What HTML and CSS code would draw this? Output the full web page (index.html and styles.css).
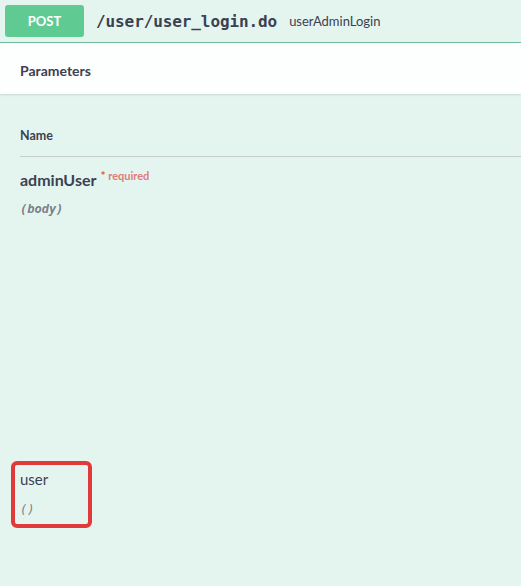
FILE: index.html
```html
<!DOCTYPE html>
<html>
<head>
<meta charset="utf-8">
<link rel="stylesheet" href="styles.css">
</head>
<body>
<div class="opblock">
  <div class="summary">
    <span class="method">POST</span>
    <span class="path">/user/user_login.do</span>
    <span class="desc">userAdminLogin</span>
  </div>
  <div class="section-header">
    <h4>Parameters</h4>
  </div>
  <div class="params">
    <div class="col-head">Name</div>
    <div class="param">
      <div class="pname">adminUser<span class="req"><span class="star">*</span> required</span></div>
      <div class="pin">(body)</div>
    </div>
    <div class="param highlight">
      <div class="pname plain">user</div>
      <div class="pin">()</div>
    </div>
  </div>
</div>
</body>
</html>
```
FILE: styles.css
```css
html, body {
  margin: 0;
  padding: 0;
  height: 100%;
  background: #e4f5ef;
}
body {
  font-family: Lato, "Open Sans", sans-serif;
  color: #3b4151;
}
.opblock {
  min-height: 586px;
  background: #e4f5ef;
}
.summary {
  display: flex;
  align-items: center;
  height: 42px;
  padding: 0 5px;
  border-bottom: 1px solid #6dbf9a;
  box-sizing: content-box;
}
.method {
  display: flex;
  align-items: center;
  justify-content: center;
  width: 79px;
  height: 32px;
  background: #5fcb92;
  color: #fff;
  font-weight: 700;
  font-size: 13px;
  border-radius: 3px;
}
.path {
  margin-left: 12px;
  font-family: "DejaVu Sans Mono", monospace;
  font-weight: 600;
  font-size: 16px;
  color: #3b4151;
  letter-spacing: -0.1px;
}
.desc {
  margin-left: 12px;
  font-size: 13px;
  color: #3b4151;
}
.section-header {
  background: #fdfefe;
  height: 51px;
  display: flex;
  align-items: center;
  padding: 0 20px;
  box-shadow: 0 1px 2px rgba(0,0,0,0.12);
}
.section-header h4 {
  margin: 0;
  padding-top: 3px;
  font-size: 14px;
  font-weight: 700;
}
.params {
  padding: 0 0 0 20px;
}
.col-head {
  margin-top: 32px;
  height: 30px;
  font-size: 12.5px;
  font-weight: 700;
  line-height: 19px;
  border-bottom: 1px solid #c6cfcd;
}
.param {
  padding-top: 12px;
}
.pname {
  font-size: 16px;
  font-weight: 700;
  line-height: 22px;
}
.pname.plain {
  font-weight: 400;
  font-size: 15px;
}
.req {
  position: relative;
  top: -6px;
  margin-left: 4px;
  font-size: 11px;
  font-weight: 700;
  color: #e17a7a;
}
.star {
  color: #e04f4f;
  font-size: 12px;
}
.pin {
  margin-top: 9px;
  font-family: "DejaVu Sans Mono", monospace;
  font-style: italic;
  font-size: 12px;
  font-weight: 600;
  color: #7a7f89;
}
.highlight {
  position: relative;
  margin-top: 252px;
  padding-top: 0;
}
.highlight::before {
  content: "";
  position: absolute;
  left: -9px;
  top: -7px;
  width: 81px;
  height: 67px;
  border: 4px solid #e23a3a;
  border-radius: 6px;
  box-sizing: border-box;
}
.highlight .pin {
  margin-top: 13px;
  font-weight: 400;
}
```
